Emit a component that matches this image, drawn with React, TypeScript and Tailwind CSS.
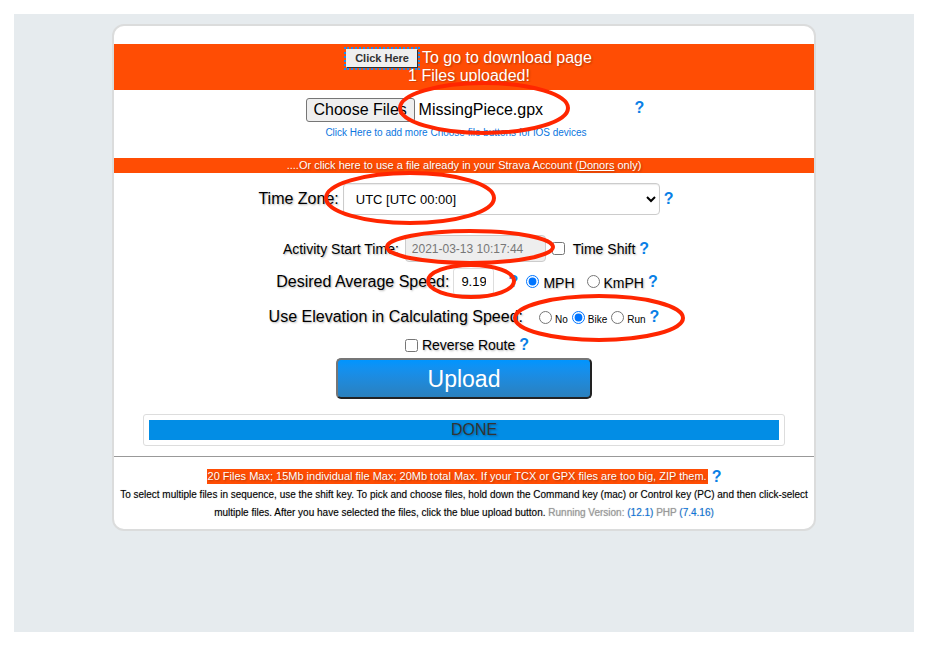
import { useState } from "react";

const HELP = "font-bold text-[#0a7fe6] text-base leading-5";
const SHADOW = "[text-shadow:1px_1px_2px_rgba(0,0,0,0.3)]";

const Help = ({ topic }: { topic: string }) => (
  <button type="button" aria-label={`Help: ${topic}`} className={HELP}>
    ?
  </button>
);

const circles = [
  { cx: 372, cy: 84, rx: 84, ry: 25 },
  { cx: 298, cy: 174, rx: 84, ry: 25 },
  { cx: 358, cy: 223, rx: 83, ry: 16 },
  { cx: 359, cy: 257, rx: 43, ry: 16 },
  { cx: 487, cy: 294, rx: 84, ry: 22 },
];

const Marks = () => (
  <svg
    width="704"
    height="507"
    className="pointer-events-none absolute -top-0.5 left-1/2 -translate-x-1/2"
    fill="none"
    stroke="#ff2600"
    strokeWidth="4"
  >
    {circles.map((c) => (
      <ellipse key={c.cy} {...c} />
    ))}
  </svg>
);

const App = () => {
  const [unit, setUnit] = useState("MPH");
  const [mode, setMode] = useState("Bike");
  const [speed, setSpeed] = useState("9.19");

  return (
    <div className="flex min-h-screen bg-white pt-[14px] pr-[23px] pb-[15px] pl-[14px] font-['Liberation_Sans',Arial,sans-serif] text-black">
      <main className="flex-1 bg-[#e6ebee] pt-[10px]">
        <form
          onSubmit={(e) => e.preventDefault()}
          className="relative mx-auto w-full max-w-[704px] rounded-xl border-2 border-[#dbdcdc] bg-white pt-[18px] pb-[7px]"
        >
          <div
            className={`h-[46px] bg-[#ff4d04] pt-1 pl-[10px] text-center text-base text-white ${SHADOW}`}
          >
            <div className="flex h-5 items-center justify-center gap-1">
              <button
                type="button"
                className="h-[19px] border border-t-[#eee] border-r-[#333] border-b-[#333] border-l-[#eee] bg-[#efefef] px-2 text-[11px] leading-4 font-bold text-[#333] outline-2 outline-dotted outline-[#1a8cf0]"
              >
                Click Here
              </button>
              <span>To go to download page</span>
            </div>
            <p className="h-[14px] overflow-hidden leading-4">
              1 Files uploaded!
            </p>
          </div>

          <div className="mt-2 flex h-6 justify-center gap-[14px] pl-[22px]">
            <label className="flex w-[315px] items-center gap-1 text-base">
              <input type="file" multiple className="sr-only" />
              <span className="h-6 w-[109px] rounded-[3px] border border-[#767676] bg-[#efefef] text-center leading-[22px]">
                Choose Files
              </span>
              <span>MissingPiece.gpx</span>
            </label>
            <div className="flex items-start">
              <Help topic="files" />
            </div>
          </div>
          <p className="mt-[3px] mb-[18px] pr-4 text-center text-[10px] leading-[15px]">
            <a href="#more" className="text-[#0a76e0]">
              Click Here to add more Choose file buttons for iOS devices
            </a>
          </p>

          <p
            className={`bg-[#ff4d04] text-center text-[11px] leading-[15px] text-white ${SHADOW}`}
          >
            ....Or click here to use a file already in your Strava Account (
            <a href="#donors" className="underline">
              Donors
            </a>{" "}
            only)
          </p>

          <div className="mt-[10px] flex h-8 items-center justify-center gap-1 pl-1">
            <label htmlFor="zone" className={SHADOW}>
              Time Zone:
            </label>
            <select
              id="zone"
              className="h-8 w-[317px] rounded border border-[#ccc] bg-white pl-2 text-[13px] shadow-[inset_0_1px_1px_rgba(0,0,0,0.08)]"
            >
              <option>UTC [UTC 00:00]</option>
            </select>
            <Help topic="time zone" />
          </div>

          <div className="mt-5 flex h-[27px] items-center justify-center gap-1 pl-1 text-sm">
            <label htmlFor="start" className={`pr-0.5 ${SHADOW}`}>
              Activity Start Time:
            </label>
            <input
              id="start"
              disabled
              value="2021-03-13 10:17:44"
              className="h-[27px] w-[141px] rounded border border-[#ccc] bg-[#eee] px-1.5 text-[12px] text-[#777]"
            />
            <label className="flex items-center gap-2 pl-0.5">
              <input type="checkbox" />
              <span className={SHADOW}>Time Shift</span>
            </label>
            <Help topic="time shift" />
          </div>

          <div className="mt-1.5 flex h-[27px] items-center justify-center gap-1 pl-1.5 text-sm">
            <label htmlFor="speed" className={`text-base ${SHADOW}`}>
              Desired Average Speed:
            </label>
            <input
              id="speed"
              value={speed}
              onChange={(e) => setSpeed(e.target.value)}
              className="h-[27px] w-[41px] rounded-[3px] border border-[#ddd] px-[7px] text-[13px]"
            />
            <div className="flex w-5 justify-end">
              <Help topic="average speed" />
            </div>
            {["MPH", "KmPH"].map((u) => (
              <label key={u} className="flex items-center gap-1 pl-1 nth-of-type-3:pl-2">
                <input
                  type="radio"
                  name="unit"
                  checked={unit === u}
                  onChange={() => setUnit(u)}
                />
                <span className={`pt-0.5 ${SHADOW}`}>{u}</span>
              </label>
            ))}
            <Help topic="units" />
          </div>

          <fieldset className="mt-3 flex h-5 items-center justify-center gap-1">
            <span className={`pr-3 ${SHADOW}`}>
              Use Elevation in Calculating Speed:
            </span>
            {["No", "Bike", "Run"].map((m) => (
              <label key={m} className="flex items-center gap-[3px] text-[10px]">
                <input
                  type="radio"
                  name="mode"
                  checked={mode === m}
                  onChange={() => setMode(m)}
                />
                <span className="pt-1">{m}</span>
              </label>
            ))}
            <Help topic="elevation" />
          </fieldset>

          <div className="mt-2 flex h-5 items-center justify-center gap-1 pl-1.5 text-sm">
            <label className="flex items-center gap-1">
              <input type="checkbox" />
              <span className={SHADOW}>Reverse Route</span>
            </label>
            <Help topic="reverse route" />
          </div>

          <button
            type="submit"
            className="mx-auto mt-[3px] block h-[41px] w-64 rounded-[5px] border-2 border-t-[#767676] border-r-[#222] border-b-[#222] border-l-[#767676] bg-linear-to-b from-[#0095ff] to-[#2a80bd] text-[23px] leading-9 text-white"
          >
            Upload
          </button>

          <div className="mx-[29px] mt-[15px] rounded-[3px] border border-[#ddd] p-[5px]">
            <div
              className={`h-5 bg-[#028de5] pl-5 text-center leading-5 text-[#333] ${SHADOW}`}
            >
              DONE
            </div>
          </div>

          <hr className="mt-[10px] border-t border-[#999]" />

          <div className="mt-3 flex h-[15px] items-center justify-center gap-1 text-[11px]">
            <span
              className={`bg-[#ff4d04] px-px leading-[15px] text-white ${SHADOW}`}
            >
              20 Files Max; 15Mb individual file Max; 20Mb total Max. If your
              TCX or GPX files are too big, ZIP them.
            </span>
            <Help topic="file limits" />
          </div>
          <p className="mt-0.5 px-1 text-center text-[10px] leading-[18px] [text-shadow:0_0_1px_rgba(0,0,0,0.3)]">
            To select multiple files in sequence, use the shift key. To pick and
            choose files, hold down the Command key (mac) or Control key (PC)
            and then click-select multiple files. After you have selected the
            files, click the blue upload button.{" "}
            <span className="text-[#999]">Running Version:</span>{" "}
            <span className="text-[#0a76e0]">(12.1)</span>{" "}
            <span className="text-[#999]">PHP</span>{" "}
            <span className="text-[#0a76e0]">(7.4.16)</span>
          </p>

          <Marks />
        </form>
      </main>
    </div>
  );
};

export default App;
